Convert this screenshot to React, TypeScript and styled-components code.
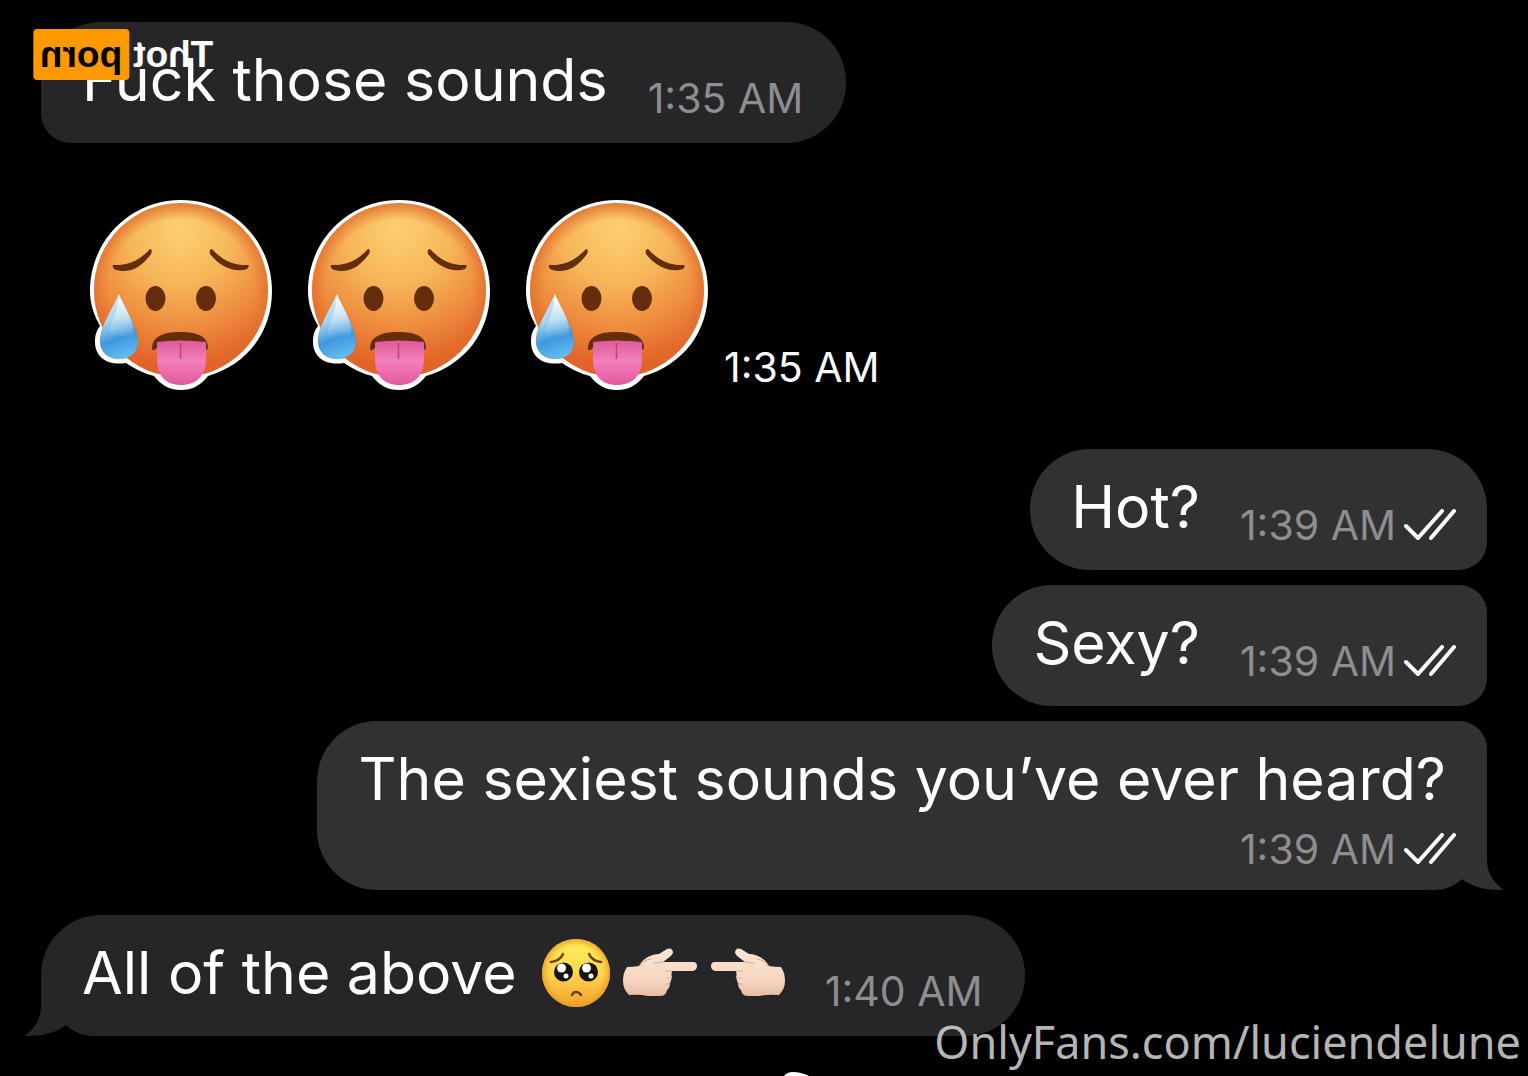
import React from "react";
import styled, { createGlobalStyle, css } from "styled-components";

const GlobalStyle = createGlobalStyle`
  * { box-sizing: border-box; }
  html, body { margin: 0; background: #000; }
  body { font-family: Inter, "Liberation Sans", sans-serif; }
  svg { display: block; flex: none; }
`;

const Screen = styled.main`
  position: relative;
  min-height: 100vh;
  overflow: hidden;
  background: #000;
`;

const Thread = styled.section`
  display: flex;
  flex-direction: column;
  gap: 15px;
  padding: 22px 41px 0;
`;

type Side = "in" | "out";

const Bubble = styled.article<{ $side: Side; $corners: string; $stacked?: boolean; $first?: boolean }>`
  position: relative;
  display: flex;
  align-items: flex-end;
  gap: 40px;
  align-self: ${(p) => (p.$side === "in" ? "flex-start" : "flex-end")};
  margin-top: ${(p) => (p.$first ? "10px" : "0")};
  padding: 21px ${(p) => (p.$side === "in" ? "43px" : "31px")} 17px 41px;
  border-radius: ${(p) => p.$corners};
  background: ${(p) => (p.$side === "in" ? "#262628" : "#313131")};
  ${(p) =>
    p.$stacked &&
    css`
      flex-direction: column;
      gap: 10px;
    `}
`;

const Text = styled.p<{ $stacked?: boolean }>`
  display: flex;
  align-items: center;
  margin: 0 ${(p) => (p.$stacked ? "10px" : "0")} ${(p) => (p.$stacked ? "0" : "10px")} 0;
  color: #fff;
  font-size: 59px;
  line-height: 73px;
  white-space: nowrap;
`;

const Emojis = styled.span`
  display: flex;
  align-items: center;
  gap: 12px;
  margin-left: 24px;
`;

const Meta = styled.div<{ $raised?: boolean }>`
  display: flex;
  align-items: center;
  gap: 8px;
  margin-bottom: ${(p) => (p.$raised ? "4px" : "0")};
`;

const Time = styled.time<{ $bright?: boolean }>`
  color: ${(p) => (p.$bright ? "#fff" : "#8e8e90")};
  font-size: 41px;
  line-height: 48px;
  white-space: nowrap;
`;

const Stickers = styled.article`
  display: flex;
  align-items: flex-end;
  gap: 18px;
  padding: 37px 0 39px 39px;
`;

const StickerTime = styled.div`
  margin: 0 0 4px -10px;
`;

const Tail = styled.svg<{ $side: Side }>`
  position: absolute;
  bottom: 0;
  ${(p) => (p.$side === "in" ? "left: -17px; transform: scaleX(-1);" : "right: -17px;")}
`;

const Brand = styled.div`
  position: absolute;
  top: 29px;
  left: 33px;
  display: flex;
  align-items: center;
  gap: 4px;
  transform: scaleX(-1);
  color: #fff;
  font: 700 37px/51px "Liberation Sans", Arial, sans-serif;
`;

const BrandBox = styled.span`
  padding: 0 7px;
  border-radius: 4px;
  background: #ff9900;
  color: #000;
`;

const Credit = styled.footer`
  position: absolute;
  right: 7px;
  bottom: 4px;
  color: rgba(215, 215, 215, 0.85);
  font: 400 45px/61px "Noto Sans", "Open Sans", sans-serif;
`;

const Peek = styled.svg`
  position: absolute;
  bottom: 0;
  left: 784px;
`;

const BubbleTail = ({ side }: { side: Side }) => (
  <Tail $side={side} width="72" height="60" viewBox="0 0 72 60">
    <path d="M0 60C13 60 21 57 30 49C40 57 53 60 72 60C62 53 55 44 55 30V0H30L0 40Z" fill={side === "in" ? "#262628" : "#313131"} />
  </Tail>
);

const Ticks = () => (
  <svg width="52" height="32" viewBox="0 0 52 32" fill="none" stroke="#fff" strokeWidth="4" strokeLinecap="round" strokeLinejoin="round" role="img" aria-label="Read">
    <path d="M2 17L14 29L38 2M27 29L50 2" />
  </svg>
);

const HotFace = ({ id }: { id: string }) => {
  const face = `${id}-face`;
  const shine = `${id}-shine`;
  const drop = `${id}-drop`;
  const gloss = `${id}-gloss`;
  const tongue = `${id}-tongue`;
  const outline =
    "M111 15C161 15 202 55 202 106C202 148 176 180 138 191C130 201 122 205 111 205C100 205 92 201 84 191C75 189 65 184 56 178C39 181 25 173 25 157C25 151 26 146 30 141C24 130 20 119 20 106C20 55 61 15 111 15Z";
  return (
    <svg width="200" height="200" viewBox="10 10 200 200" role="img" aria-label="Hot face">
      <defs>
        <radialGradient id={face} cx=".5" cy=".16" r=".86">
          <stop offset="0" stopColor="#fcd072" />
          <stop offset=".35" stopColor="#f7b65a" />
          <stop offset=".65" stopColor="#ee8b3e" />
          <stop offset="1" stopColor="#dc5420" />
        </radialGradient>
        <radialGradient id={shine} cx=".5" cy=".52" r=".52">
          <stop offset=".82" stopColor="#e66e2b" stopOpacity="0" />
          <stop offset="1" stopColor="#dd7030" stopOpacity=".85" />
        </radialGradient>
        <linearGradient id={drop} x1=".3" y1="0" x2=".5" y2="1">
          <stop offset="0" stopColor="#ddeaf0" />
          <stop offset=".4" stopColor="#a9d4ee" />
          <stop offset=".7" stopColor="#3f98df" />
          <stop offset="1" stopColor="#62bcf0" />
        </linearGradient>
        <linearGradient id={gloss} x1="0" y1="0" x2="0" y2="1">
          <stop offset="0" stopColor="#fff" />
          <stop offset="1" stopColor="#d3e8f4" stopOpacity="0" />
        </linearGradient>
        <linearGradient id={tongue} x1="0" y1="0" x2="0" y2="1">
          <stop offset="0" stopColor="#dc5b99" />
          <stop offset=".45" stopColor="#f47fbb" />
          <stop offset="1" stopColor="#e4589c" />
        </linearGradient>
      </defs>
      <path d={outline} fill="#fff" />
      <circle cx="111" cy="105" r="87" fill={`url(#${face})`} />
      <circle cx="111" cy="105" r="87" fill={`url(#${shine})`} />
      <g fill="#642d0c">
        <path d="M43 80C58 81 70 75 80 64Q83 64 81 69C70 85 56 89 44 84Q42 81 43 80Z" />
        <path d="M178 80C164 81 152 75 142 64Q139 64 140 69C151 83 166 88 177 84Q180 81 178 80Z" />
        <ellipse cx="85.500" cy="113.500" rx="10" ry="12.500" />
        <ellipse cx="136" cy="113.500" rx="10" ry="12.500" />
        <path d="M82 164C82 151 94 147 110 147C127 147 138 151 138 163Q137 166 133 163H87Q83 167 82 164Z" />
      </g>
      <path d="M87 157Q110 154 136 157V174C136 191 126 200 111 200C96 200 87 191 87 174Z" fill={`url(#${tongue})`} />
      <path d="M110.500 158V174" stroke="#bd4279" strokeWidth="1.500" />
      <path d="M49 108C45 119 30 140 30 156C30 167 38 174 49 174C61 174 68 167 68 157C68 141 53 121 49 108Z" fill={`url(#${drop})`} stroke="#b05b2e" strokeOpacity=".2" />
      <path d="M49 110C57 126 64 136 63 150Q56 158 49 148C42 154 38 150 41 140Q47 128 49 110Z" fill={`url(#${gloss})`} />
    </svg>
  );
};

const PleadingFace = () => (
  <svg width="70" height="70" viewBox="0 0 70 70" role="img" aria-label="Pleading face">
    <defs>
      <linearGradient id="plead" x1="0" y1="0" x2="0" y2="1">
        <stop offset="0" stopColor="#fff35c" />
        <stop offset=".5" stopColor="#ffd750" />
        <stop offset="1" stopColor="#f2a02c" />
      </linearGradient>
      <radialGradient id="plead-edge">
        <stop offset=".75" stopColor="#f3ae2b" stopOpacity="0" />
        <stop offset="1" stopColor="#e89b25" stopOpacity=".8" />
      </radialGradient>
    </defs>
    <circle cx="35" cy="35" r="34" fill="url(#plead)" />
    <circle cx="35" cy="35" r="34" fill="url(#plead-edge)" />
    <path d="M10 24Q19 23 22 16M60 24Q51 23 48 16M31 57Q32 54 35 54T40 57" fill="none" stroke="#70420c" strokeWidth="2.500" strokeLinecap="round" />
    <circle cx="22.500" cy="34" r="9.500" fill="#17130f" />
    <circle cx="47.500" cy="34" r="9.500" fill="#17130f" />
    <g fill="#fff">
      <circle cx="20.500" cy="30" r="4.500" />
      <circle cx="45.500" cy="30" r="4.500" />
      <circle cx="25" cy="38" r="2.500" />
      <circle cx="50" cy="38" r="2.500" />
    </g>
  </svg>
);

const Hand = ({ left }: { left?: boolean }) => (
  <svg width="75" height="50" viewBox="0 0 75 50" role="img" aria-label={left ? "Pointing left" : "Pointing right"}>
    <defs>
      <linearGradient id={left ? "skin-l" : "skin-r"} x1="0" y1="0" x2="0" y2="1">
        <stop offset="0" stopColor="#fbe5d5" />
        <stop offset=".7" stopColor="#f5d5c1" />
        <stop offset="1" stopColor="#e8bba2" />
      </linearGradient>
    </defs>
    <g transform={left ? "translate(75 0) scale(-1 1)" : undefined}>
      <path d="M4 19Q10 19 16 18C20 10 29 6 36 6L44 1Q49 -1 50 4Q50 7 44 11L40 14H70Q74 14 74 18T70 23H49Q48 27 49 29Q48 33 47 35Q47 40 44 42Q43 48 37 48H25Q16 46 6 47Q0 41 0 33T4 19Z" fill={`url(#${left ? "skin-l" : "skin-r"})`} />
      <path d="M17 18Q20 12 28 11M40 14Q35 15 31 15M49 23L43 23M49 29Q47 31 44 30M47 35Q45 37 43 36" fill="none" stroke="#dba98f" strokeWidth="1" strokeLinecap="round" />
    </g>
  </svg>
);

export default function App() {
  return (
    <Screen>
      <GlobalStyle />
      <Thread>
        <Bubble $side="in" $corners="60px 60px 60px 30px">
          <Text>Fuck those sounds</Text>
          <Meta $raised><Time>1:35 AM</Time></Meta>
        </Bubble>
        <Stickers>
          <HotFace id="one" />
          <HotFace id="two" />
          <HotFace id="three" />
          <StickerTime><Time $bright>1:35 AM</Time></StickerTime>
        </Stickers>
        <Bubble $side="out" $corners="60px 60px 28px 60px">
          <Text>Hot?</Text>
          <Meta $raised><Time>1:39 AM</Time><Ticks /></Meta>
        </Bubble>
        <Bubble $side="out" $corners="60px 28px 28px 60px">
          <Text>Sexy?</Text>
          <Meta $raised><Time>1:39 AM</Time><Ticks /></Meta>
        </Bubble>
        <Bubble $side="out" $corners="60px 28px 60px 60px" $stacked>
          <BubbleTail side="out" />
          <Text $stacked>The sexiest sounds you’ve ever heard?</Text>
          <Meta><Time>1:39 AM</Time><Ticks /></Meta>
        </Bubble>
        <Bubble $side="in" $corners="60px" $first>
          <BubbleTail side="in" />
          <Text>
            All of the above
            <Emojis><PleadingFace /><Hand /><Hand left /></Emojis>
          </Text>
          <Meta $raised><Time>1:40 AM</Time></Meta>
        </Bubble>
      </Thread>
      <Brand><span>Thot</span><BrandBox>porn</BrandBox></Brand>
      <Peek width="26" height="4" viewBox="0 0 26 4" aria-hidden="true">
        <path d="M0 4Q3 0 9 0Q17 0 25 4Z" fill="#fff" />
      </Peek>
      <Credit>OnlyFans.com/luciendelune</Credit>
    </Screen>
  );
}
